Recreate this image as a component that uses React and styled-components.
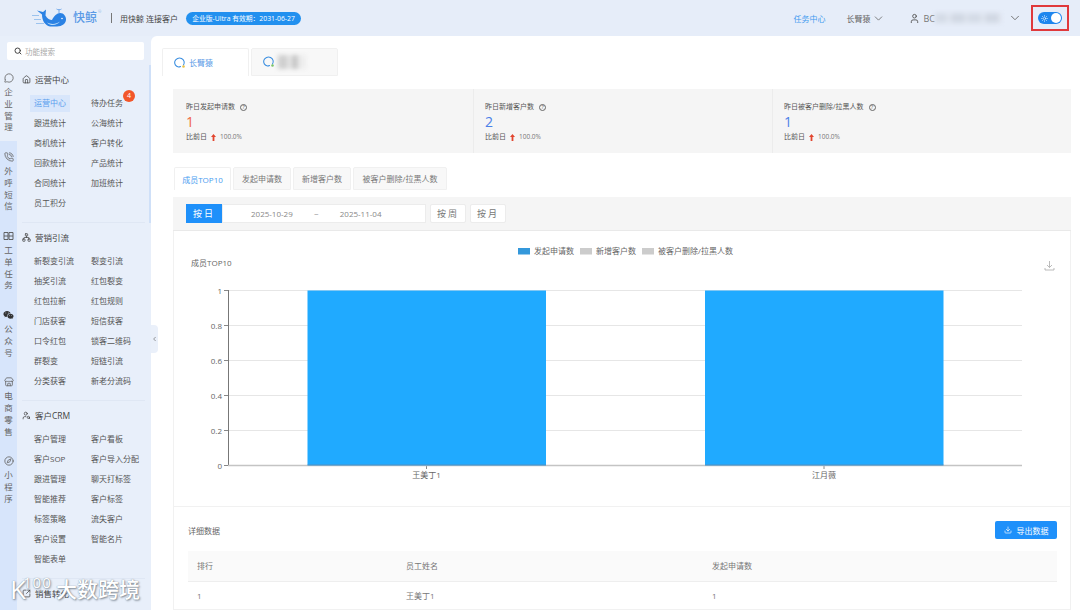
import React from "react";
import styled, { createGlobalStyle } from "styled-components";
import {
  ChevronDown,
  ChevronLeft,
  Compass,
  Download,
  Home,
  MessageCircle,
  Network,
  PhoneCall,
  Search,
  SquareArrowOutUpRight,
  Store,
  Sun,
  User,
  UserSearch,
} from "lucide-react";
import { RiWechatFill } from "react-icons/ri";

const FONT = `"Open Sans", "Noto Sans CJK SC", sans-serif`;

const GlobalStyle = createGlobalStyle`
  html, body {
    margin: 0;
    padding: 0;
    overflow: hidden;
  }
  body {
    font-family: ${FONT};
    color: #555;
    background: #e7eefa;
  }
  * {
    box-sizing: border-box;
  }
`;

const Page = styled.div`
  position: relative;
  width: 1080px;
  height: 610px;
  overflow: hidden;
  display: flex;
  flex-direction: column;
`;

/* 顶部栏 */
const Header = styled.header`
  height: 36px;
  flex: none;
  display: flex;
  align-items: center;
  padding: 0 11px 0 32px;
  background: #e6edf9;
  font-size: 8px;
`;

const BrandName = styled.span`
  margin-left: 3px;
  font-size: 12px;
  font-weight: 500;
  color: #5a9ae6;
  line-height: 1;
`;

const BrandMark = styled.sup`
  font-size: 4px;
  color: #8fb6e6;
  margin-left: 1px;
  align-self: flex-start;
  margin-top: 9px;
  width: 4px;
`;

const HeaderSep = styled.i`
  width: 1px;
  height: 10px;
  background: #777;
  margin: 0 8px 0 9px;
`;

const Slogan = styled.span`
  width: 57px;
  color: #444;
  white-space: nowrap;
`;

const PlanBadge = styled.span`
  margin-left: 9px;
  height: 13px;
  width: 115px;
  border-radius: 7px;
  background: #2290ef;
  color: #fff;
  font-size: 6.8px;
  line-height: 13px;
  text-align: center;
  white-space: nowrap;
`;

const HeaderRight = styled.div`
  margin-left: auto;
  display: flex;
  align-items: center;
  svg {
    flex: none;
  }
`;

const TaskLink = styled.span`
  color: #3f9bf0;
  margin-right: 21px;
  white-space: nowrap;
`;

const OrgName = styled.span`
  display: flex;
  align-items: center;
  gap: 1px;
  color: #666;
  margin-right: 24px;
  white-space: nowrap;
`;

const UserName = styled.span`
  display: flex;
  align-items: center;
  color: #777;
  margin-left: 4px;
  margin-right: 7px;
  font-size: 9px;
`;

const BlurBlocks = styled.i`
  display: block;
  width: ${(p) => p.$w}px;
  height: ${(p) => p.$h}px;
  filter: blur(2px);
  background: ${(p) =>
    p.$gray
      ? "repeating-linear-gradient(90deg, #cfcfcf 0 9px, #e4e4e4 9px 14px, #c8c8c8 14px 20px, #ededed 20px 28px)"
      : "repeating-linear-gradient(90deg, #d5dce7 0 11px, #dde3ed 11px 17px, #d2d9e4 17px 29px, #dbe1eb 29px 34px)"};
`;

const ThemeFrame = styled.div`
  width: 38px;
  height: 26px;
  margin-left: 9px;
  border: 2px solid #e0393c;
  display: flex;
  align-items: center;
  justify-content: center;
`;

const ThemeToggle = styled.div`
  width: 24px;
  height: 12px;
  border-radius: 6px;
  background: #1e86ee;
  color: #d8ecff;
  display: flex;
  align-items: center;
  justify-content: space-between;
  padding: 0 1px 0 3px;
`;

const ToggleThumb = styled.i`
  width: 10px;
  height: 10px;
  border-radius: 50%;
  background: #fff;
`;

/* 主体 */
const Body = styled.div`
  flex: 1;
  min-height: 0;
  display: flex;
`;

const Sidebar = styled.aside`
  position: relative;
  width: 151px;
  flex: none;
  display: flex;
  flex-direction: column;
  background: #e8effa;
`;

const SearchBox = styled.div`
  height: 18px;
  margin: 6px 7px 2px;
  flex: none;
  background: #fff;
  border-radius: 2px;
  display: flex;
  align-items: center;
  gap: 3px;
  padding-left: 7px;
  color: #aaa;
  font-size: 7.5px;
  svg {
    color: #444;
  }
`;

const SideBody = styled.div`
  flex: 1;
  min-height: 0;
  display: flex;
  overflow: hidden;
`;

const Rail = styled.nav`
  width: 17px;
  flex: none;
  background: #d7e5fb;
`;

const RailItem = styled.div`
  padding: 9px 0 8px;
  display: flex;
  flex-direction: column;
  align-items: center;
  color: #666;
  font-size: 8.5px;
  line-height: 11.75px;
  background: ${(p) => (p.$active ? "#e8effa" : "transparent")};
  svg {
    display: block;
    height: 14px;
    margin-bottom: 1px;
  }
`;

const Menu = styled.div`
  flex: 1;
  min-width: 0;
  padding: 3px 6px 0 5px;
`;

const MenuSection = styled.section`
  padding: 7px 0 9px;
  border-bottom: 1px solid #dfe7f4;
`;

const MenuTitle = styled.div`
  height: 16px;
  margin-bottom: 5px;
  padding-bottom: 2px;
  display: flex;
  align-items: center;
  gap: 4px;
  font-size: 8.5px;
  color: #444;
`;

const MenuGrid = styled.div`
  display: grid;
  grid-template-columns: 57px 57px;
  padding-left: 8px;
`;

const MenuItem = styled.div`
  position: relative;
  height: 20px;
  display: flex;
  align-items: center;
  white-space: nowrap;
  font-size: 8px;
  color: #555;
  padding: 0 0 2px 4px;
  &::before {
    content: "";
    display: ${(p) => (p.$active ? "block" : "none")};
    position: absolute;
    left: 0;
    top: 2px;
    width: 40px;
    height: 17px;
    background: #d8e6fb;
    z-index: 0;
  }
  span {
    position: relative;
    color: ${(p) => (p.$active ? "#5aa0ee" : "inherit")};
  }
`;

const CountBadge = styled.b`
  position: absolute;
  left: 36px;
  top: -3px;
  width: 12px;
  height: 12px;
  border-radius: 50%;
  background: #f2562a;
  color: #fff;
  font-size: 7px;
  font-weight: 500;
  line-height: 12px;
  text-align: center;
`;

const ScrollThumb = styled.i`
  position: absolute;
  right: 0;
  top: 29px;
  width: 2px;
  height: 158px;
  background: #cfe0f8;
`;

const CollapseHandle = styled.div`
  position: absolute;
  left: 151px;
  top: 325px;
  width: 7px;
  height: 28px;
  background: #eaf0fa;
  border-radius: 0 4px 4px 0;
  display: flex;
  align-items: center;
  justify-content: center;
  color: #555;
  z-index: 2;
`;

const Main = styled.main`
  flex: 1;
  min-width: 0;
  background: #fff;
  border-top-left-radius: 6px;
  padding: 12px 9px 0 11px;
  overflow: hidden;
`;

const AccountTabs = styled.div`
  display: flex;
  gap: 2px;
  height: 28px;
`;

const AccountTab = styled.div`
  width: 87px;
  display: flex;
  align-items: center;
  gap: 3px;
  padding-left: 10px;
  font-size: 8px;
  color: #5a9ae6;
  border: 1px solid #f0f0f0;
  border-bottom: ${(p) => (p.$active ? "none" : "1px solid #f0f0f0")};
  background: ${(p) => (p.$active ? "#fff" : "#f8f8f8")};
  border-radius: 2px 2px 0 0;
`;

const Content = styled.div`
  margin: 13px 0 0 11px;
`;

const Stats = styled.div`
  display: grid;
  grid-template-columns: 300px 299px 299px;
  height: 64px;
  background: #f5f5f5;
`;

const StatCell = styled.div`
  padding: 13px 0 0 ${(p) => (p.$first ? 13 : 11)}px;
  border-left: ${(p) => (p.$first ? "none" : "1px solid #ececec")};
  font-size: 7px;
  color: #555;
`;

const StatLabel = styled.div`
  display: flex;
  align-items: center;
  gap: 5px;
  line-height: 10px;
`;

const HelpDot = styled.i`
  width: 7px;
  height: 7px;
  border: 1px solid #666;
  border-radius: 50%;
  font-style: normal;
  font-size: 5px;
  line-height: 5px;
  text-align: center;
`;

const StatValue = styled.div`
  font-size: 14px;
  line-height: 18px;
  height: 18px;
  margin-top: 1px;
  color: ${(p) => (p.$up ? "#f0663f" : "#4a80e8")};
`;

const StatCompare = styled.div`
  display: flex;
  align-items: center;
  gap: 4px;
  line-height: 10px;
  margin-top: 1px;
  em {
    font-style: normal;
    color: #777;
    font-size: 6.5px;
  }
`;

const SubTabs = styled.div`
  display: flex;
  gap: 2px;
  margin-top: 14px;
  height: 23px;
  padding-left: 1px;
`;

const SubTab = styled.div`
  width: ${(p) => p.$w}px;
  display: flex;
  align-items: center;
  justify-content: center;
  font-size: 8px;
  white-space: nowrap;
  color: ${(p) => (p.$active ? "#4a9cf0" : "#777")};
  background: ${(p) => (p.$active ? "#fff" : "#f8f8f8")};
  border: 1px solid #f0f0f0;
  border-bottom: ${(p) => (p.$active ? "none" : "1px solid #f0f0f0")};
  border-radius: 2px 2px 0 0;
`;

const DateBar = styled.div`
  margin-top: 7px;
  height: 34px;
  display: flex;
  align-items: center;
  gap: 4px;
  padding-left: 13px;
  background: #f5f5f5;
  border-bottom: 1px solid #e9e9e9;
`;

const DateRange = styled.div`
  display: flex;
  height: 19px;
`;

const DayButton = styled.div`
  width: 36px;
  background: #1e90fa;
  color: #fff;
  font-size: 9px;
  letter-spacing: 2px;
  display: flex;
  align-items: center;
  justify-content: center;
`;

const DateInput = styled.div`
  width: 204px;
  background: #fff;
  border: 1px solid #ececec;
  font-size: 8px;
  color: #888;
  display: flex;
  align-items: center;
  padding-left: 28px;
  span:nth-child(2) {
    width: 47px;
    text-align: center;
  }
`;

const GhostButton = styled.div`
  width: 36px;
  height: 19px;
  background: #fff;
  border: 1px solid #ececec;
  border-radius: 2px;
  color: #777;
  font-size: 9px;
  letter-spacing: 2px;
  display: flex;
  align-items: center;
  justify-content: center;
`;

const Card = styled.div`
  border: 1px solid #f1f1f1;
  border-top: none;
`;

const ChartBox = styled.div`
  height: 276px;
  border-bottom: 1px solid #f1f1f1;
  svg {
    display: block;
  }
  text {
    font-family: ${FONT};
    font-size: 8px;
    fill: #666;
  }
`;

const DetailBar = styled.div`
  display: flex;
  align-items: center;
  justify-content: space-between;
  margin: 14px 13px 12px 14px;
  height: 18px;
  font-size: 8px;
  color: #666;
`;

const ExportButton = styled.div`
  width: 62px;
  height: 18px;
  background: #1e90fa;
  border-radius: 2px;
  color: #fff;
  display: flex;
  align-items: center;
  justify-content: center;
  gap: 5px;
`;

const Table = styled.table`
  width: 869px;
  margin-left: 14px;
  border-collapse: collapse;
  font-size: 8px;
  color: #777;
  th {
    height: 30px;
    background: #fafafa;
    border-bottom: 1px solid #eee;
    font-weight: 400;
    text-align: left;
    padding-left: 9px;
  }
  td {
    height: 28px;
    padding-left: 9px;
  }
`;

/* 水印 */
const Watermark = styled.div`
  position: absolute;
  left: 10px;
  top: 575px;
  display: flex;
  color: #fff;
  font-weight: 500;
  text-shadow: 0 0 1px #7d8894, 1px 1px 2px #7d8894;
  white-space: nowrap;
  z-index: 3;
  pointer-events: none;
`;

const WatermarkK = styled.span`
  width: 13px;
  font-size: 26px;
  line-height: 28px;
`;

const WatermarkNum = styled.span`
  width: 33px;
  font-size: 15px;
  line-height: 15px;
  letter-spacing: 1px;
`;

const WatermarkText = styled.span`
  font-size: 21px;
  line-height: 29px;
`;

const WhaleLogo = () => (
  <svg width="38" height="23" viewBox="32 6.500 38 23" fill="none" style={{ flex: "none" }}>
    <path d="M32 15h7M34 19h7M36 23h8" stroke="#9cc3ee" strokeWidth="1" />
    <path
      d="M42 14 L37 10 L43 11.500 L46 9 L45.500 15 C47 18 50 19.500 52 19.500 C54 15.500 57 12.500 60 12.500 C64 12.500 66 16 66 19 C66 23 62 26 57 26 L50 26 C45 25 42 20 42 14Z"
      fill="#2b82e4"
    />
    <path d="M47 22 C51 24 56 24 60 21 C57 25 51 26 47 22Z" fill="#bcdcf8" />
    <path d="M59 12.500V9M56.500 8.500 C58 9.500 60 9.500 61.500 8.500" stroke="#5a9ae6" strokeWidth="0.8" />
    <circle cx="62" cy="18" r="0.8" fill="#fff" />
  </svg>
);

const ChatIcon = ({ muted }) => (
  <svg width="13" height="12" viewBox="0 0 13 12" fill="none" style={{ flex: "none" }}>
    <path
      d="M10.500 8 A4.800 4.500 0 1 0 5.500 10 C6.500 10 7 9.800 7.500 9.500"
      stroke="#3c8fe0"
      strokeWidth="1.100"
      strokeLinecap="round"
    />
    <circle cx="10.500" cy="9.500" r="1.300" fill={muted ? "#7cc46a" : "#e8c24a"} />
  </svg>
);

const TicketIcon = () => (
  <svg width="11" height="14" viewBox="0 0 11 14" fill="none">
    <path d="M1 3.500h4v7H1zM6 3.500h4v7H6zM1 7h4M6 7h4" stroke="#555" strokeWidth="0.9" />
  </svg>
);

const UpArrow = () => (
  <svg width="5" height="7" viewBox="0 0 5 7">
    <path d="M2.500 0 L5 3 H3.400 V7 H1.600 V3 H0Z" fill="#e2452e" />
  </svg>
);

const BarChart = () => {
  const ticks = [
    ["1", 290.5],
    ["0.8", 325.5],
    ["0.6", 360.5],
    ["0.4", 395.5],
    ["0.2", 430.5],
    ["0", 465.5],
  ];
  const legend = [
    [518, "#3498db", "发起申请数"],
    [580, "#cccccc", "新增客户数"],
    [642, "#cccccc", "被客户删除/拉黑人数"],
  ];
  const bars = [
    [307.5, 426.5, "王美丁1"],
    [705, 824, "江月薇"],
  ];
  return (
    <svg width="896" height="275" viewBox="174 231 896 275">
      {legend.map(([x, color, name]) => (
        <g key={name}>
          <rect x={x} y="248" width="12" height="6.500" fill={color} />
          <text x={x + 16} y="254">
            {name}
          </text>
        </g>
      ))}
      <text x="191" y="266">
        成员TOP10
      </text>
      <path
        d="M1049.500 261v6.500M1047 265l2.500 2.500 2.500-2.500M1045 268v2h9v-2"
        stroke="#aaa"
        strokeWidth="0.8"
        fill="none"
      />
      {ticks.map(([label, y]) => (
        <g key={label}>
          {label !== "0" && <line x1="228" x2="1022" y1={y} y2={y} stroke="#e6e6e6" />}
          <line x1="224" x2="228" y1={y} y2={y} stroke="#888" />
          <text x="222" y={y + 3} textAnchor="end">
            {label}
          </text>
        </g>
      ))}
      {bars.map(([x, center, name]) => (
        <g key={name}>
          <rect x={x} y="290.500" width="238.500" height="174.500" fill="#20aaff" />
          <line x1={center} x2={center} y1="465" y2="469" stroke="#888" />
          <text x={center} y="478" textAnchor="middle">
            {name}
          </text>
        </g>
      ))}
      <line x1="228.500" x2="228.500" y1="290" y2="465" stroke="#777" />
      <line x1="228" x2="1022" y1="465.500" y2="465.500" stroke="#c4c4c4" strokeWidth="1.500" />
      <line x1="307.500" x2="546" y1="465" y2="465" stroke="#2a8bd0" />
      <line x1="705" x2="943.500" y1="465" y2="465" stroke="#2a8bd0" />
    </svg>
  );
};

const railItems = [
  { icon: <MessageCircle size={10} />, label: "企业管理", active: true },
  { icon: <PhoneCall size={10} />, label: "外呼短信" },
  { icon: <TicketIcon />, label: "工单任务" },
  { icon: <RiWechatFill size={11} color="#333" />, label: "公众号" },
  { icon: <Store size={10} />, label: "电商零售" },
  { icon: <Compass size={10} />, label: "小程序" },
];

const menuSections = [
  {
    icon: <Home size={9} />,
    title: "运营中心",
    items: ["运营中心", "待办任务", "跟进统计", "公海统计", "商机统计", "客户转化", "回款统计", "产品统计", "合同统计", "加班统计", "员工积分"],
  },
  {
    icon: <Network size={9} />,
    title: "营销引流",
    items: ["新裂变引流", "裂变引流", "抽奖引流", "红包裂变", "红包拉新", "红包规则", "门店获客", "短信获客", "口令红包", "锁客二维码", "群裂变", "短链引流", "分类获客", "新老分流码"],
  },
  {
    icon: <UserSearch size={9} />,
    title: "客户CRM",
    items: ["客户管理", "客户看板", "客户SOP", "客户导入分配", "跟进管理", "聊天打标签", "智能推荐", "客户标签", "标签策略", "流失客户", "客户设置", "智能名片", "智能表单"],
  },
  {
    icon: <SquareArrowOutUpRight size={9} />,
    title: "销售转化",
    items: [],
  },
];

const stats = [
  { label: "昨日发起申请数", value: 1, up: true },
  { label: "昨日新增客户数", value: 2 },
  { label: "昨日被客户删除/拉黑人数", value: 1 },
];

const subTabs = [
  ["成员TOP10", 57],
  ["发起申请数", 58],
  ["新增客户数", 58],
  ["被客户删除/拉黑人数", 94],
];

export default function App() {
  return (
    <Page>
      <GlobalStyle />
      <Header>
        <WhaleLogo />
        <BrandName>快鲸</BrandName>
        <BrandMark>®</BrandMark>
        <HeaderSep />
        <Slogan>用快鲸 连接客户</Slogan>
        <PlanBadge>企业版-Ultra 有效期：2031-06-27</PlanBadge>
        <HeaderRight>
          <TaskLink>任务中心</TaskLink>
          <OrgName>
            长臂猿
            <ChevronDown size={13} strokeWidth={1.5} />
          </OrgName>
          <User size={11} color="#555" />
          <UserName>
            BC
            <BlurBlocks $w={66} $h={10} />
          </UserName>
          <ChevronDown size={14} strokeWidth={1.5} color="#666" />
          <ThemeFrame>
            <ThemeToggle>
              <Sun size={7} strokeWidth={2.5} />
              <ToggleThumb />
            </ThemeToggle>
          </ThemeFrame>
        </HeaderRight>
      </Header>
      <Body>
        <Sidebar>
          <SearchBox>
            <Search size={8} strokeWidth={3} />
            功能搜索
          </SearchBox>
          <SideBody>
            <Rail>
              {railItems.map((item) => (
                <RailItem key={item.label} $active={item.active}>
                  {item.icon}
                  {item.label.split("").map((ch, i) => (
                    <span key={i}>{ch}</span>
                  ))}
                </RailItem>
              ))}
            </Rail>
            <Menu>
              {menuSections.map((sec) => (
                <MenuSection key={sec.title}>
                  <MenuTitle>
                    {sec.icon}
                    {sec.title}
                  </MenuTitle>
                  <MenuGrid>
                    {sec.items.map((name, i) => (
                      <MenuItem key={name + i} $active={sec.title === "运营中心" && i === 0}>
                        <span>{name}</span>
                        {name === "待办任务" && <CountBadge>4</CountBadge>}
                      </MenuItem>
                    ))}
                  </MenuGrid>
                </MenuSection>
              ))}
            </Menu>
          </SideBody>
          <ScrollThumb />
        </Sidebar>
        <CollapseHandle>
          <ChevronLeft size={10} />
        </CollapseHandle>
        <Main>
          <AccountTabs>
            <AccountTab $active>
              <ChatIcon />
              长臂猿
            </AccountTab>
            <AccountTab>
              <ChatIcon muted />
              <BlurBlocks $gray $w={28} $h={14} />
            </AccountTab>
          </AccountTabs>
          <Content>
            <Stats>
              {stats.map((s, i) => (
                <StatCell key={s.label} $first={i === 0}>
                  <StatLabel>
                    {s.label}
                    <HelpDot>?</HelpDot>
                  </StatLabel>
                  <StatValue $up={s.up}>{s.value}</StatValue>
                  <StatCompare>
                    比前日 <UpArrow />
                    <em>100.0%</em>
                  </StatCompare>
                </StatCell>
              ))}
            </Stats>
            <SubTabs>
              {subTabs.map(([name, w], i) => (
                <SubTab key={name} $w={w} $active={i === 0}>
                  {name}
                </SubTab>
              ))}
            </SubTabs>
            <DateBar>
              <DateRange>
                <DayButton>按日</DayButton>
                <DateInput>
                  <span>2025-10-29</span>
                  <span>~</span>
                  <span>2025-11-04</span>
                </DateInput>
              </DateRange>
              <GhostButton>按周</GhostButton>
              <GhostButton>按月</GhostButton>
            </DateBar>
            <Card>
              <ChartBox>
                <BarChart />
              </ChartBox>
              <DetailBar>
                详细数据
                <ExportButton>
                  <Download size={8} />
                  导出数据
                </ExportButton>
              </DetailBar>
              <Table>
                <colgroup>
                  <col width="209" />
                  <col width="306" />
                  <col />
                </colgroup>
                <thead>
                  <tr>
                    <th>排行</th>
                    <th>员工姓名</th>
                    <th>发起申请数</th>
                  </tr>
                </thead>
                <tbody>
                  <tr>
                    <td>1</td>
                    <td>王美丁1</td>
                    <td>1</td>
                  </tr>
                </tbody>
              </Table>
            </Card>
          </Content>
        </Main>
      </Body>
      <Watermark>
        <WatermarkK>K</WatermarkK>
        <WatermarkNum>100</WatermarkNum>
        <WatermarkText>大数跨境</WatermarkText>
      </Watermark>
    </Page>
  );
}
